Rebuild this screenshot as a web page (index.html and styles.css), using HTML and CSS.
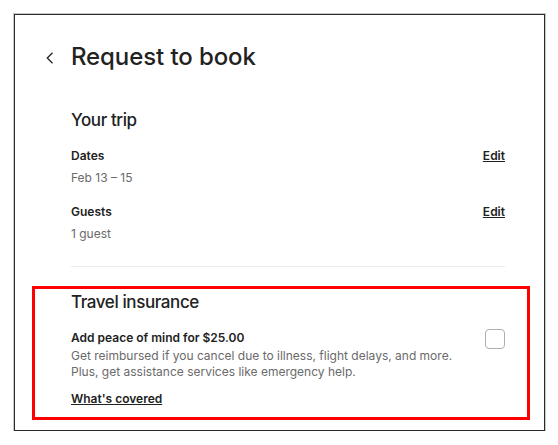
FILE: index.html
```html
<!DOCTYPE html>
<html lang="en">
<head>
<meta charset="utf-8">
<title>Request to book</title>
<link rel="stylesheet" href="styles.css">
</head>
<body>
<div class="frame">
  <header class="header">
    <span class="back" aria-label="Back">
      <svg width="8" height="12" viewBox="0 0 8 12"><path d="M6.5 0.8 L1.3 6 L6.5 11.2" fill="none" stroke="#222" stroke-width="1.3"/></svg>
    </span>
    <h1 class="title">Request to book</h1>
  </header>

  <section class="trip">
    <h2 class="section-title">Your trip</h2>
    <div class="row first">
      <div class="info">
        <div class="label">Dates</div>
        <div class="value">Feb 13 – 15</div>
      </div>
      <a class="link" href="#">Edit</a>
    </div>
    <div class="row">
      <div class="info">
        <div class="label">Guests</div>
        <div class="value">1 guest</div>
      </div>
      <a class="link" href="#">Edit</a>
    </div>
  </section>

  <hr class="divider">

  <section class="insurance">
    <h2 class="section-title">Travel insurance</h2>
    <div class="ins-row">
      <div class="ins-text">
        <div class="label">Add peace of mind for $25.00</div>
        <p class="desc">Get reimbursed if you cancel due to illness, flight delays, and more.<br>Plus, get assistance services like emergency help.</p>
      </div>
      <span class="checkbox"></span>
    </div>
    <a class="link covered" href="#">What's covered</a>
  </section>
</div>
</body>
</html>
```
FILE: styles.css
```css
* { box-sizing: border-box; }
html, body { margin: 0; padding: 0; background: #fff; }
body {
  font-family: Inter, "Noto Sans", sans-serif;
  color: #222222;
}
.frame {
  margin: 14px 0 0 14px;
  width: 531px;
  height: 417px;
  border: 1px solid #2a2a2a;
  box-shadow: 0 0 0 1px #c8c8c8;
  padding: 27px 39px 0 56px;
}
.header {
  display: flex;
  align-items: center;
  margin-left: -25px;
}
.back {
  width: 25px;
  display: flex;
  align-items: center;
}
.back svg { display: block; margin-top: 2px; }
.title {
  margin: 0;
  font-size: 24px;
  line-height: 30px;
  font-weight: 500;
  letter-spacing: -0.1px;
}
.section-title {
  margin: 0;
  font-size: 17px;
  line-height: 24px;
  font-weight: 500;
  letter-spacing: -0.4px;
}
.trip { margin-top: 36px; }
.row {
  display: flex;
  justify-content: space-between;
  align-items: flex-start;
  margin-top: 16px;
}
.row.first { margin-top: 15px; }
.label {
  font-size: 12px;
  line-height: 18px;
  font-weight: 600;
}
.value {
  font-size: 12px;
  line-height: 18px;
  color: #6a6a6a;
  margin-top: 4px;
}
.link {
  font-size: 12px;
  line-height: 18px;
  font-weight: 600;
  color: #222222;
  text-decoration: underline;
}
.divider {
  border: 0;
  border-top: 1px solid #ebebeb;
  margin: 23px 0 0 0;
}
.insurance {
  margin: 19px -25px 0 -39px;
  border: 3px solid #ff0000;
  padding: 1px 22px 9px 36px;
}
.ins-row {
  display: flex;
  justify-content: space-between;
  align-items: flex-start;
  margin-top: 15px;
}
.desc {
  margin: 1px 0 0 0;
  font-size: 12px;
  line-height: 16px;
  color: #6a6a6a;
}
.checkbox {
  flex: none;
  width: 20px;
  height: 20px;
  border: 1px solid #b0b0b0;
  border-radius: 4px;
  margin-top: 0;
}
.covered {
  display: block;
  width: max-content;
  margin-top: 10px;
}
```
